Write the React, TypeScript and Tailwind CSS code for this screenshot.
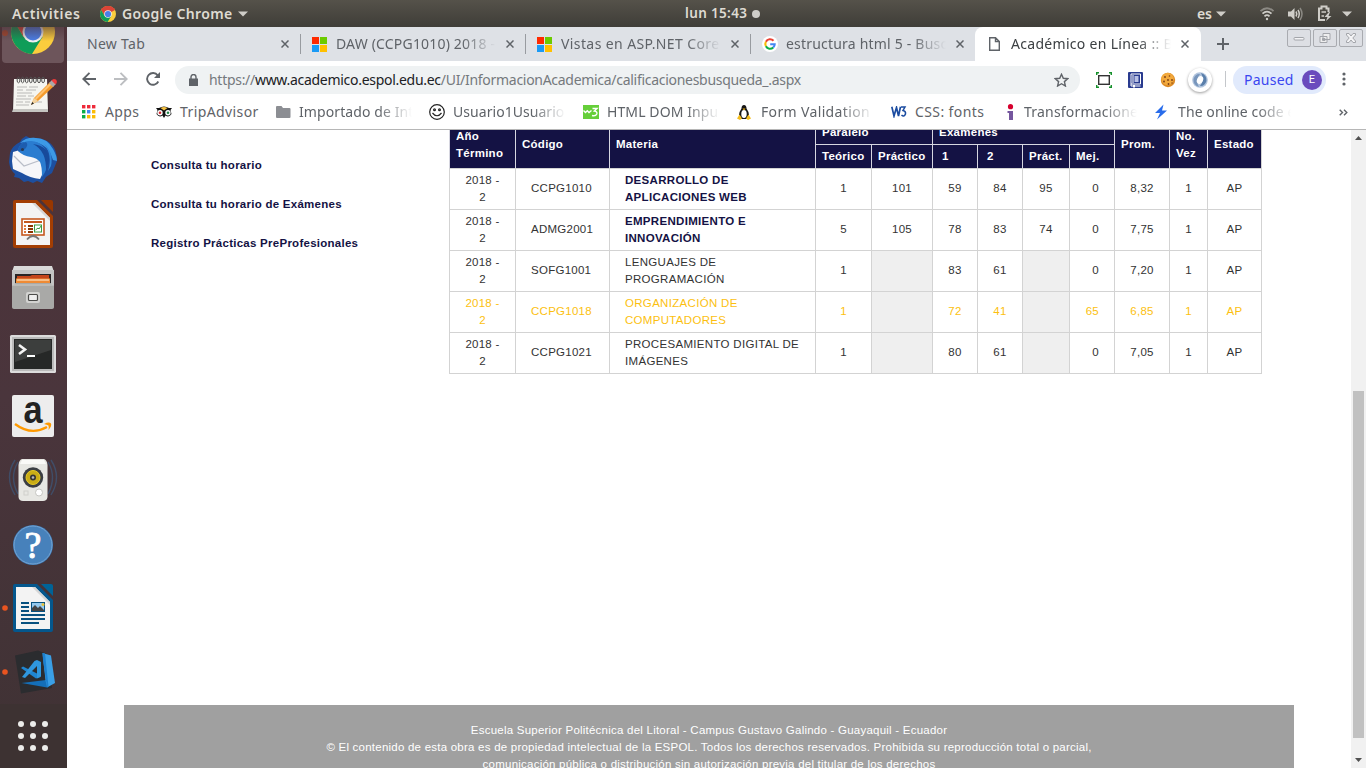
import React from "react";

const ubuntu = "font-['Noto_Sans',sans-serif]";

function ChromeLogo({ size }: { size: number }) {
  return (
    <svg width={size} height={size} viewBox="0 0 44 44" className="shrink-0">
      <circle cx="22" cy="22" r="22" fill="#fbcd3d" />
      <path d="M22 22 L3 11 A22 22 0 0 1 41 11 Z" fill="#db4437" />
      <path d="M22 11 H41 A22 22 0 0 0 3 11 L12.5 27 Z" fill="#db4437" />
      <path d="M3 11 A22 22 0 0 0 21 44 L31.5 27 L22 22 L12.5 27 Z" fill="#0f9d58" />
      <circle cx="22" cy="22" r="10.5" fill="#f1f1f1" />
      <circle cx="22" cy="22" r="8.5" fill="#4a7fe8" />
    </svg>
  );
}

function Caret() {
  return (
    <svg width="10" height="6" viewBox="0 0 10 6">
      <path d="M0 .5H10L5 5.5Z" fill="#cfcdc8" />
    </svg>
  );
}

function TopBar() {
  return (
    <header className={`${ubuntu} flex h-[27px] shrink-0 items-center bg-gradient-to-b from-[#55524a] to-[#3f3d38] text-[14px] font-semibold text-[#dfdbd2]`}>
      <span className="w-[88px] pl-3 tracking-[0.6px]">Activities</span>
      <div className="flex w-[597px] items-center pl-3">
        <ChromeLogo size={16} />
        <span className="ml-[6px] mr-[6px] w-[110px] whitespace-nowrap tracking-[0.35px]">Google Chrome</span>
        <Caret />
      </div>
      <span className="w-[67px] whitespace-nowrap text-[13.5px] tracking-[0.35px]">lun 15:43</span>
      <span className="h-2 w-2 rounded-full bg-[#cfcdc8]" />
      <div className="ml-auto flex items-center pr-[14px]">
        <span className="mr-[4px]">es</span>
        <Caret />
        <svg className="ml-[33px]" width="16" height="16" viewBox="0 0 16 16" fill="none" stroke="#cfcdc8" strokeWidth="1.8">
          <path d="M1.5 5.2Q8 -.8 14.500 5.200" stroke="#8b8983" />
          <path d="M3.500 7.700Q8 3.600 12.500 7.700" />
          <path d="M5.500 10.300Q8 8 10.500 10.300" />
          <circle cx="8" cy="13" r="1.2" fill="#cfcdc8" stroke="none" />
        </svg>
        <svg className="ml-3" width="17" height="16" viewBox="0 0 17 16" fill="none" stroke="#cfcdc8" strokeWidth="1.5">
          <path d="M1 5.500H4L7.500 2V14L4 10.500H1Z" fill="#cfcdc8" stroke="none" />
          <path d="M9 5.500Q10.500 8 9 10.500M11 4Q13.500 8 11 12" />
          <path d="M13 2Q17 8 13 14" stroke="#8b8983" />
        </svg>
        <svg className="ml-[13px]" width="16" height="17" viewBox="0 0 16 17" fill="none" stroke="#cfcdc8" strokeWidth="2">
          <path d="M11.500 7V3.500H9.500V1.500H4.500V3.500H2V15H8" />
          <path d="M4.500 7H9M4.500 11H7" strokeWidth="1.6" />
          <path d="M12 7L7.500 12H10.500L9 16L14.500 11H11.500L13 7Z" fill="#cfcdc8" stroke="none" />
        </svg>
        <span className="ml-[9px] flex"><Caret /></span>
      </div>
    </header>
  );
}

function DocBase({ dark, mid, children }: { dark: string; mid: string; children: React.ReactNode }) {
  return (
    <>
      <path d="M15 8H37L53 24V54Q53 56 51 56H15Q13 56 13 54V10Q13 8 15 8Z" fill={dark} />
      <path d="M41 8H51Q53 8 53 10V20Z" fill={mid} />
      <path d="M16 11H35L50 26V53H16Z" fill="#f3f3f3" />
      <path d="M35 11L50 26V29L32 11Z" fill="#d5d5d5" />
      {children}
    </>
  );
}

const dockIcons: { name: string; running?: boolean; art: React.ReactNode }[] = [
  {
    name: "notes",
    art: (
      <>
        <path d="M14 16H47L49 48H12Z" fill="#2d2224" opacity=".6" />
        <path d="M14 15H47L48 47H13Z" fill="#f5f5f1" />
        <path d="M13 45H48V48H12Z" fill="#c5c5c1" />
        {[0, 1, 2, 3, 4, 5, 6].map((i) => (
          <ellipse key={i} cx={18.500 + i * 4.100} cy="16" rx="1.400" ry="2.800" fill="none" stroke="#555" strokeWidth="1" />
        ))}
        <path d="M17 23H27M29 23H38M17 26H23M26 26H36M17 29H32M17 32H26M28 32H34M16 35H31M16 38H23M25 38H30M35 38H42M16 41H29" stroke="#aaa" strokeWidth=".8" />
        <path d="M31 41L34 34L50 18L54 22L38 37Z" fill="#f39a2c" />
        <path d="M35 34L50 19L51.500 20.500L36 36Z" fill="#ffc270" />
        <path d="M31 41L34 34L38 37Z" fill="#f2d3a0" />
        <path d="M31 41L32.200 38L34 39.500Z" fill="#222" />
        <path d="M49 19L52 16L56 20L53 23Z" fill="#a9a9a9" />
        <path d="M51.500 16.500Q53 14 56 15.500Q58 18 55.500 20.500Z" fill="#ee3b3b" />
      </>
    ),
  },
  {
    name: "mail",
    art: (
      <>
        <path d="M10 25L9 34Q10 42 15 46L14 49L19 50L24 54L28 53L33 55L37 53L42 55L46 49L52 45L55 38L57 33Q57 17 45 12Q37 9 30 10L26 8Q22 10 20 14Q12 18 10 25Z" fill="#1d4fa0" />
        <path d="M20 15Q26 9 36 10Q47 10 53 21Q57 28 57 33L53 32Q48 16 34 14Q26 13 20 15Z" fill="#3d9ae6" />
        <path d="M13 24L20 22L44 33L42 47L40 51Q30 50 22 45L13 41L12 33Z" fill="#f6f6f9" />
        <path d="M14 28L24 38L41 32" fill="none" stroke="#b9bdc8" strokeWidth="1.200" />
        <path d="M18 23Q19 13 31 13Q46 14 48 31Q48 41 42 49Q42 38 40 34Q37 30 31 29Q23 28 18 23Z" fill="#2a7cd0" />
        <path d="M18 23Q18 16 26 14Q29 17 25 21Q22 24 18 23Z" fill="#1d5daf" />
        <path d="M33 16Q49 18 49 32L46 44Q47 23 33 16Z" fill="#174a9b" />
        <path d="M44 16Q54 24 51 38L48 43Q53 27 44 16Z" fill="#2f86d9" />
        <circle cx="22.500" cy="21.500" r="1.500" fill="#2a3950" />
      </>
    ),
  },
  {
    name: "impress",
    art: (
      <DocBase dark="#a33e03" mid="#983700">
        <rect x="22" y="27" width="22" height="16" fill="#fff" stroke="#c5581f" strokeWidth="1.600" />
        <rect x="24" y="29" width="18" height="2" fill="#c5581f" />
        <path d="M24 34H26M24 37H26M24 40H26" stroke="#e0793d" strokeWidth="1.800" />
        <path d="M28 34H33M28 37H33M28 40H33" stroke="#8c3500" strokeWidth="1.800" />
        <rect x="34.500" y="33" width="7" height="7" fill="#fff" stroke="#3b9b3f" />
        <path d="M35.500 38L38 36L39 37L41 34" fill="none" stroke="#3b9b3f" />
        <path d="M27 47.500Q30 44 33 44Q36 44 39 47.500" fill="none" stroke="#777" strokeWidth="1.800" />
      </DocBase>
    ),
  },
  {
    name: "files",
    art: (
      <>
        <path d="M14 10H52L54 16V28H12V16Z" fill="#d9d9d9" />
        <path d="M12 14H54V50Q54 52 52 52H14Q12 52 12 50Z" fill="#c4c4c4" />
        <path d="M15 18H51V28H15Z" fill="#292425" />
        <path d="M17 20H30L32 19H49V28H17Z" fill="#c4451b" />
        <path d="M16 22.500H50V28H16Z" fill="#ef8b35" />
        <path d="M17 24H49" stroke="#fff1dc" />
        <path d="M15 27H51V28L54 30V51Q54 53 52 53H14Q12 53 12 51V30L15 28Z" fill="#a9a9a7" />
        <path d="M13 29H53" stroke="#cbcbc9" />
        <rect x="26" y="36" width="14" height="11" rx="2" fill="#d3d3d1" />
        <rect x="28.500" y="38.500" width="9" height="6" rx="1" fill="#eee" stroke="#4b4b49" strokeWidth="1.200" />
      </>
    ),
  },
  {
    name: "terminal",
    art: (
      <>
        <rect x="10" y="15" width="46" height="38" rx="1.500" fill="#dcdcdc" />
        <rect x="12" y="17" width="42" height="34" fill="#bababa" />
        <rect x="14" y="19" width="38" height="30" fill="#262827" />
        <path d="M15 20H51V30L15 42Z" fill="#3c3e3d" />
        <path d="M19 25L25 29.500L19 34" fill="none" stroke="#f4f4f4" strokeWidth="2.600" />
        <path d="M27 36H35" stroke="#fff" strokeWidth="2" />
      </>
    ),
  },
  {
    name: "store",
    art: (
      <>
        <rect x="12" y="11" width="42" height="42" rx="2" fill="#ededed" />
        <g transform="translate(33 39.300) scale(.88 1)">
          <text x="0" y="0" textAnchor="middle" fontFamily="Liberation Sans" fontWeight="700" fontSize="39" fill="#222">a</text>
        </g>
        <path d="M15 40Q31 52 47 43" fill="none" stroke="#ff9900" strokeWidth="2.300" />
        <path d="M44 40Q49 37.500 51 39.500Q52 42 48.500 46Q49 43 48.500 41.500Q47 40.500 44 40Z" fill="#ff9900" />
      </>
    ),
  },
  {
    name: "audio",
    art: (
      <>
        <g fill="none" stroke="#3d5577" strokeWidth="1.400" opacity=".75">
          <path d="M15 12Q4 29 15 47M18 14Q9 29 18 46M51 12Q62 29 51 47M48 14Q57 29 48 46" />
        </g>
        <path d="M22 11H44Q47 12 47.500 17V49Q47 53 43 53H23Q19 53 18.500 49L18.500 17Q19 12 22 11Z" fill="#e7e7e3" />
        <path d="M22 12H44L46 16H20Z" fill="#fafaf8" />
        <circle cx="33" cy="29.500" r="10.200" fill="#3b3e43" />
        <circle cx="33" cy="29.500" r="7" fill="#c9ac16" stroke="#e5c926" />
        <circle cx="33" cy="29.500" r="3" fill="#343434" />
        <circle cx="33" cy="29.500" r="1.300" fill="#b9b9b9" />
        <circle cx="39" cy="44.500" r="3.500" fill="#fff" stroke="#c6c6c2" />
        <rect x="24" y="43" width="4" height="4" fill="none" stroke="#d0d0cc" />
      </>
    ),
  },
  {
    name: "help",
    art: (
      <>
        <circle cx="33" cy="33" r="20" fill="#3c77b4" />
        <circle cx="33" cy="33" r="19" fill="#4781bb" stroke="#75a5d3" />
        <text x="33" y="46" textAnchor="middle" fontFamily="Liberation Serif" fontSize="38" fill="#fff" stroke="#fff" strokeWidth=".9">?</text>
      </>
    ),
  },
  {
    name: "writer",
    running: true,
    art: (
      <DocBase dark="#04578d" mid="#006397">
        <path d="M21 27H29M21 31H29M21 35H29M21 39H45M21 43H45M21 47H39" stroke="#085180" strokeWidth="2" />
        <rect x="31.500" y="26.500" width="13" height="9" fill="#95c9ee" stroke="#085180" />
        <path d="M32 35V32L35 29L38 32L40 30L44 34V35Z" fill="#444" />
        <circle cx="43" cy="28.500" r="1.500" fill="#e9c339" />
      </DocBase>
    ),
  },
  {
    name: "code",
    running: true,
    art: (
      <>
        <path d="M15 15.500L38 10.500L47 14L52 48L21 53.500Z" fill="#2b2c2f" />
        <path d="M21.500 43L46 40L47 47.500Z" fill="#146fb8" />
        <path d="M42.500 13L51 15.500L55 43L47 47.500L45.500 40Z" fill="#3a9fe6" />
        <path d="M42.500 13L45 13.500L48.500 46.500L47 47.500L43 20Z" fill="#1c80cf" />
        <path d="M21 28L23 26.500L39 34.500L40.500 37L36 38.500Z" fill="#1f86d2" />
        <path d="M22 37L34.500 21L37 20L41 22V36.500L37 38.500V26L25 38Z" fill="#2f97de" />
      </>
    ),
  },
];

function Dock() {
  return (
    <aside className="flex w-[67px] shrink-0 flex-col overflow-hidden bg-gradient-to-b from-[#4d3238] via-[#4a353c] to-[#3f3234]">
      <div className="relative flex h-[37px] shrink-0 flex-col justify-end px-[2px] pb-[1px] pr-[3px]">
        <div className="flex h-[36px] items-end justify-center overflow-hidden rounded-b-[4px] bg-[#6d555b] pb-[9px]">
          <ChromeLogo size={44} />
        </div>
        <span className="absolute left-[2px] top-[3px] h-[6px] w-[6px] rounded-full bg-[#a5482e]" />
        <span className="absolute left-0 top-0 h-[14px] w-[67px] bg-gradient-to-b from-[#4d3238]/60 to-transparent" />
      </div>
      {dockIcons.map((d) => (
        <svg key={d.name} width="67" height="64" viewBox="0 0 67 64" className="shrink-0">
          {d.running && <circle cx="5" cy="32" r="2.800" fill="#e95420" />}
          {d.art}
        </svg>
      ))}
      <svg width="67" height="64" viewBox="0 0 67 64" className="shrink-0 bg-[#3d3232]">
        {[20, 32, 44].map((y) => [21, 33, 45].map((x) => <circle key={`${x}-${y}`} cx={x} cy={y} r="3" fill="#ececea" />))}
      </svg>
    </aside>
  );
}

function CloseX() {
  return (
    <svg width="8" height="8" viewBox="0 0 8 8" className="shrink-0" stroke="#5f6368" strokeWidth="1.500">
      <path d="M.5 .5L7.500 7.500M7.500 .5L.5 7.500" />
    </svg>
  );
}

function MsLogo() {
  return (
    <svg width="15" height="15" viewBox="0 0 15 15">
      <path d="M0 0H7V7H0Z" fill="#ff2a00" />
      <path d="M8 0H15V7H8Z" fill="#6ccb00" />
      <path d="M0 8H7V15H0Z" fill="#1a9af5" />
      <path d="M8 8H15V15H8Z" fill="#ffc000" />
    </svg>
  );
}

function GoogleG() {
  return (
    <svg width="16" height="16" viewBox="0 0 16 16">
      <circle cx="8" cy="8" r="8" fill="#fff" />
      <g fill="none" strokeWidth="2.100">
        <path d="M11.500 4.700A4.700 4.700 0 0 0 3.900 5.700" stroke="#ea4335" />
        <path d="M3.900 5.700A4.700 4.700 0 0 0 3.900 10.300" stroke="#fbbc05" />
        <path d="M3.900 10.300A4.700 4.700 0 0 0 11.200 11.500" stroke="#0cae48" />
        <path d="M11.200 11.500A4.700 4.700 0 0 0 12.700 8.200H8.200" stroke="#4285f4" />
      </g>
    </svg>
  );
}

function PageIcon() {
  return (
    <svg width="11" height="14" viewBox="0 0 11 14" fill="none" stroke="#5f6368" strokeWidth="1.400">
      <path d="M.7 .7H6.500L10.300 4.500V13.300H.7ZM6.500 .7V4.500H10.300" />
    </svg>
  );
}

const tabs = [
  { title: "New Tab", track: "tracking-[0.3px]" },
  { title: "DAW (CCPG1010) 2018 -", icon: <MsLogo />, track: "tracking-[0.18px]", faded: true },
  { title: "Vistas en ASP.NET Core", icon: <MsLogo />, track: "tracking-[0.4px]", faded: true },
  { title: "estructura html 5 - Busc", icon: <GoogleG />, track: "tracking-[0.2px]", faded: true },
];

const fade = "whitespace-nowrap [mask-image:linear-gradient(to_right,black_calc(100%_-_34px),transparent)]";

function WinButton({ children }: { children: React.ReactNode }) {
  return (
    <span className="flex h-[18px] w-6 items-center justify-center rounded-[2px] border border-[#a9abb0] bg-[#dddfe4]">
      <svg width="14" height="12" viewBox="0 0 14 12" fill="none" stroke="#a3a5aa">{children}</svg>
    </span>
  );
}

function TabStrip() {
  return (
    <div className={`${ubuntu} flex h-[34px] items-stretch bg-[#dee1e6] pl-2 text-[14px] text-[#5f6368]`}>
      {tabs.map((t, i) => (
        <div key={t.title} className="flex w-[225px] shrink-0 items-center pl-3">
          {t.icon && <span className="flex w-6 shrink-0">{t.icon}</span>}
          <span className={`pb-[2px] whitespace-nowrap ${t.faded ? fade : ""} ${t.track} ${t.icon ? "w-[160px]" : "w-[184px]"}`}>{t.title}</span>
          <span className="ml-[10px] flex"><CloseX /></span>
          {i < 3 && <span className="-mr-px ml-auto h-5 w-px bg-[#989ba0]" />}
        </div>
      ))}
      <div className="flex w-[226px] shrink-0 items-center rounded-t-[8px] bg-white pl-[14px] text-[#3c4043]">
        <span className="w-[22px] shrink-0"><PageIcon /></span>
        <span className={`${fade} w-[160px] pb-[2px] tracking-[0.3px]`}>Académico en Línea :: B</span>
        <span className="ml-[10px] flex"><CloseX /></span>
      </div>
      <svg width="12" height="12" viewBox="0 0 12 12" className="ml-4 mt-[11px] shrink-0" stroke="#5f6368" strokeWidth="2">
        <path d="M6 0V12M0 6H12" />
      </svg>
      <div className="ml-auto flex gap-[2px] pr-[3px] pt-[2px]">
        <WinButton><rect x="2" y="5.500" width="10" height="2.500" rx="1" fill="#f3f3f5" /></WinButton>
        <WinButton>
          <path d="M5 1.500H12V7.500H5ZM2 4.500H9V10.500H2ZM4.500 6.500H7V8.500H4.500Z" fill="#eee" />
        </WinButton>
        <WinButton><path d="M2.500 1.500H5L7 4L9 1.500H11.500V3L8.800 6L11.500 9V10.500H9L7 8L5 10.500H2.500V9L5.200 6L2.500 3Z" fill="#f3f3f5" /></WinButton>
      </div>
    </div>
  );
}

function Toolbar() {
  return (
    <div className={`${ubuntu} flex h-9 items-center bg-white text-[14px]`}>
      <div className="flex w-[108px] shrink-0 items-center gap-[18px] pl-[15px]">
        <svg width="14" height="14" viewBox="0 0 14 14" fill="none" stroke="#5f6368" strokeWidth="1.900"><path d="M14 7H1.500M7.500 .8L1.300 7L7.500 13.200" /></svg>
        <svg width="14" height="14" viewBox="0 0 14 14" fill="none" stroke="#bcbec1" strokeWidth="1.900"><path d="M0 7H12.500M6.500 .8L12.700 7L6.500 13.200" /></svg>
        <svg width="15" height="14" viewBox="0 0 15 14" fill="none" stroke="#5f6368" strokeWidth="1.900"><path d="M12.300 9.500A5.900 5.900 0 1 1 11.700 3.300" /><path d="M14 0V6H8Z" fill="#5f6368" stroke="none" /></svg>
      </div>
      <div className="mt-[2px] flex h-7 w-[905px] shrink-0 items-center rounded-full bg-[#eff2f3] pl-[14px] pr-[11px]">
        <svg width="9" height="12" viewBox="0 0 9 12" className="shrink-0"><path d="M0 4.500H9V12H0Z" fill="#5f6368" /><path d="M2 5V3A2.500 2.500 0 0 1 7 3V5" fill="none" stroke="#5f6368" strokeWidth="1.400" /></svg>
        <span className="ml-[11px] whitespace-nowrap pb-[2px] tracking-[-0.29px] text-[#75797d]">
          https://<span className="text-[#202124]">www.academico.espol.edu.ec</span>/UI/InformacionAcademica/calificacionesbusqueda_.aspx
        </span>
        <svg width="15" height="14" viewBox="0 0 15 14" className="ml-auto shrink-0" fill="none" stroke="#5f6368" strokeWidth="1.400"><path d="M7.500 1.300L9.300 5.300L13.700 5.700L10.400 8.600L11.400 13L7.500 10.700L3.600 13L4.600 8.600L1.300 5.700L5.700 5.300Z" /></svg>
      </div>
      <svg width="16" height="16" viewBox="0 0 16 16" className="ml-4 mt-[2px] shrink-0" fill="none">
        <rect x="2.700" y="3.700" width="10.600" height="8.600" fill="#fff" stroke="#333" strokeWidth="1.400" />
        <path d="M.7 3V.7H3M13 .7H15.300V3M.7 13V15.300H3M13 15.300H15.300V13" stroke="#16912c" strokeWidth="1.400" />
      </svg>
      <svg width="15" height="16" viewBox="0 0 15 16" className="ml-4 mt-[2px] shrink-0">
        <rect width="15" height="16" rx="1" fill="#293b8f" />
        <path d="M3 2H12.500V12H3ZM3 12V14H12.500" fill="none" stroke="#fff" />
        <path d="M5 3V11" stroke="#fff" />
        <rect x="6.500" y="4" width="4" height="6" fill="#b9c1e5" />
        <path d="M5 13H7V16L6 15L5 16Z" fill="#fff" />
      </svg>
      <svg width="16" height="16" viewBox="0 0 16 16" className="ml-[17px] mt-[2px] shrink-0">
        <circle cx="8" cy="8" r="7.200" fill="#dc8a25" /><circle cx="7.500" cy="7" r="6.200" fill="#f2a93c" />
        <g fill="#7a3d15"><circle cx="5" cy="5" r=".9" /><circle cx="9.500" cy="4" r=".8" /><circle cx="8" cy="8" r=".9" /><circle cx="4" cy="9.500" r=".9" /><circle cx="12" cy="8" r=".9" /><circle cx="8.500" cy="12" r=".9" /><circle cx="12" cy="11" r=".7" /></g>
      </svg>
      <span className="ml-3 mt-[2px] flex h-6 w-6 shrink-0 items-center justify-center rounded-full bg-white shadow-[0_1px_3px_rgba(0,0,0,.4)]">
        <svg width="16" height="16" viewBox="0 0 16 16" fill="none"><circle cx="8" cy="8" r="7.800" fill="#b1c4dd" /><path d="M9 1Q15 3 14.500 9Q12.500 14.500 8 14Q13 8 9 1Z" fill="#5a7fab" /><path d="M7 15Q1 13 1.500 7Q3.500 1.500 8 2Q3 8 7 15Z" fill="#7896bc" /><ellipse cx="8" cy="8" rx="3" ry="4" transform="rotate(25 8 8)" fill="#fff" /></svg>
      </span>
      <span className="ml-[13px] h-4 w-px shrink-0 bg-[#c4c7cb]" />
      <div className="ml-[7px] mt-[2px] flex h-7 w-[93px] shrink-0 items-center justify-between rounded-full bg-[#e1eafc] pl-[11px] pr-1 text-[#3a46f0]">
        <span className="pb-[2px] tracking-[0.25px]">Paused</span>
        <span className="flex h-5 w-5 items-center justify-center rounded-full bg-[#6a4bbd] font-[Roboto,sans-serif] text-[11px] text-white">E</span>
      </div>
      <svg width="4" height="14" viewBox="0 0 4 14" className="ml-4 shrink-0" fill="#5f6368"><circle cx="2" cy="2" r="1.600" /><circle cx="2" cy="7" r="1.600" /><circle cx="2" cy="12" r="1.600" /></svg>
    </div>
  );
}

const bookmarks = [
  {
    title: "Apps", box: "w-[74px]", gap: "w-[23px]", track: "tracking-[0.4px]",
    icon: (
      <svg width="14" height="14" viewBox="0 0 14 14">
        {["#ee2a3a", "#ee2a3a", "#ee2a3a", "#0cae48", "#4285f4", "#fbbc05", "#0cae48", "#fbbc05", "#fbbc05"].map((c, i) => (
          <rect key={i} x={(i % 3) * 5} y={Math.floor(i / 3) * 5} width="3.400" height="3.400" fill={c} />
        ))}
      </svg>
    ),
  },
  {
    title: "TripAdvisor", box: "w-[120px]", gap: "w-[24px]", track: "tracking-[0.4px]",
    icon: (
      <svg width="16" height="12" viewBox="0 0 16 12"><path d="M0 2H3Q8 -1 13 2H16L14.500 4L15.500 8Q13 12 9.500 9.500L8 12L6.500 9.500Q3 12 .5 8L1.500 4Z" fill="#111" /><path d="M4.500 2Q8 0 11.500 2L8 4.500Z" fill="#f6c343" /><circle cx="4" cy="6.700" r="2.700" fill="#fff" /><circle cx="12" cy="6.700" r="2.700" fill="#fff" /><circle cx="4" cy="6.700" r="1.300" fill="#d8262f" /><circle cx="12" cy="6.700" r="1.300" fill="#21884b" /></svg>
    ),
  },
  {
    title: "Importado de Int", box: "w-[153px]", gap: "w-[23px]", fade: true, track: "tracking-[0.1px]",
    icon: <svg width="15" height="12" viewBox="0 0 15 12"><path d="M1 0H5.500L7 2H13.500Q14.500 2 14.500 3V11Q14.500 12 13.500 12H1Q0 12 0 11V1Q0 0 1 0Z" fill="#8c8e93" /></svg>,
  },
  {
    title: "Usuario1Usuario", box: "w-[154px]", gap: "w-[24px]", fade: true, track: "tracking-[0.05px]",
    icon: <svg width="16" height="16" viewBox="0 0 16 16" fill="none" stroke="#222" strokeWidth="1.200"><circle cx="8" cy="8" r="7.300" fill="#fff" /><circle cx="5.500" cy="5.800" r=".9" /><circle cx="10.500" cy="5.800" r=".9" /><path d="M3.500 9Q8 14.500 12.500 9" /></svg>,
  },
  {
    title: "HTML DOM Inpu", box: "w-[154px]", gap: "w-[24px]", fade: true, track: "tracking-[0.1px]",
    icon: <svg width="16" height="14" viewBox="0 0 16 14" fill="none" stroke="#fff" strokeWidth="1.400"><rect width="16" height="14" fill="#66cf3a" stroke="none" /><path d="M.5 5.500L2.500 7.500L4.300 5.800L6 7.500L8.500 5.500M9.500 3.500H14L11.300 6Q14.500 6.500 13.800 9Q12.500 11.500 9 10.500" /></svg>,
  },
  {
    title: "Form Validation", box: "w-[154px]", gap: "w-[24px]", fade: true, track: "tracking-[0.35px]",
    icon: <svg width="14" height="15" viewBox="0 0 14 15"><path d="M7 0Q9.500 0 9.500 3.500Q12 7 12 10L10 14H4L2 10Q2 7 4.500 3.500Q4.500 0 7 0Z" fill="#171717" /><ellipse cx="7" cy="9" rx="2.700" ry="4" fill="#fff" /><path d="M5.500 3.500H8.500L7 5.500Z" fill="#f2b619" /><path d="M2.500 9.500L5 13.500L3 15L0 13.500ZM11.500 9.500L9 13.500L11 15L14 13.500Z" fill="#f4bd1d" /></svg>,
  },
  {
    title: "CSS: fonts", box: "w-[115px]", gap: "w-[24px]", track: "tracking-[0.4px]",
    icon: <svg width="16" height="12" viewBox="0 0 16 12" fill="none" stroke="#1a4ba0" strokeWidth="1.700"><path d="M.8 .8L3 10L5.500 1.500L7.500 10L9.500 .8" /><path d="M10 1H14L12 4.500Q15 5 14.500 8Q13 11.500 10.500 9" strokeWidth="1.500" /></svg>,
  },
  {
    title: "Transformacione", box: "w-[149px]", gap: "w-[18px]", fade: true, track: "tracking-[0.2px]",
    icon: <svg width="8" height="16" viewBox="0 0 8 16"><circle cx="4.500" cy="2.700" r="2.600" fill="#d6002e" /><path d="M1.500 7H7V16H3V9H1.500Z" fill="#75569e" /></svg>,
  },
  {
    title: "The online code e", box: "w-[160px]", gap: "w-[23px]", fade: true, track: "tracking-[0.1px]",
    icon: <svg width="12" height="16" viewBox="0 0 12 16"><path d="M8.500 .5L0 9H5L2 15.500L12 6.500H7Z" fill="#286ceb" /></svg>,
  },
];

function BookmarksBar() {
  return (
    <div className={`${ubuntu} flex h-8 items-center border-b border-[#b6b6b6] bg-white pb-[3px] pl-[15px] text-[14px] text-[#5f6368]`}>
      {bookmarks.map((b) => (
        <div key={b.title} className={`flex shrink-0 items-center ${b.box}`}>
          <span className={`flex shrink-0 ${b.gap}`}>{b.icon}</span>
          <span className={`pb-px ${b.fade ? `${fade} w-[113px]` : "whitespace-nowrap"} ${b.track}`}>{b.title}</span>
        </div>
      ))}
      <svg width="9" height="7" viewBox="0 0 9 7" className="ml-auto mr-[18px]" fill="none" stroke="#5f6368" strokeWidth="1.400"><path d="M.7 .7L3.500 3.500L.7 6.300M5 .7L7.800 3.500L5 6.300" /></svg>
    </div>
  );
}

const rows = [
  { code: "CCPG1010", name: ["DESARROLLO DE", "APLICACIONES WEB"], values: ["1", "101", "59", "84", "95", "0", "8,32", "1", "AP"], bold: true },
  { code: "ADMG2001", name: ["EMPRENDIMIENTO E", "INNOVACIÓN"], values: ["5", "105", "78", "83", "74", "0", "7,75", "1", "AP"], bold: true },
  { code: "SOFG1001", name: ["LENGUAJES DE", "PROGRAMACIÓN"], values: ["1", "", "83", "61", "", "0", "7,20", "1", "AP"] },
  { code: "CCPG1018", name: ["ORGANIZACIÓN DE", "COMPUTADORES"], values: ["1", "", "72", "41", "", "65", "6,85", "1", "AP"], warn: true },
  { code: "CCPG1021", name: ["PROCESAMIENTO DIGITAL DE", "IMÁGENES"], values: ["1", "", "80", "61", "", "0", "7,05", "1", "AP"] },
];

const head = "flex items-center border-l border-t border-[#d6d6e0] bg-[#141244] font-bold text-white";
const cell = "flex items-center border-l border-t border-[#d3d3d3] pb-px";

function Grades() {
  return (
    <div className="-mt-[10px] ml-[382px] grid w-[813px] grid-cols-[66px_94px_206px_56px_61px_45px_45px_47px_45px_55px_38px_54px] grid-rows-[24px_24px_repeat(5,41px)] border-b border-r border-[#d3d3d3]">
      <div className={`${head} row-span-2 pl-[6px]`}>Año<br />Término</div>
      <div className={`${head} row-span-2 pl-[6px]`}>Código</div>
      <div className={`${head} row-span-2 pl-[6px]`}>Materia</div>
      <div className={`${head} col-span-2 pl-[6px]`}>Paralelo</div>
      <div className={`${head} col-span-4 pl-[6px]`}>Exámenes</div>
      <div className={`${head} row-span-2 pl-[6px]`}>Prom.</div>
      <div className={`${head} row-span-2 pl-[6px]`}>No.<br />Vez</div>
      <div className={`${head} row-span-2 pl-[6px]`}>Estado</div>
      {["Teórico", "Práctico", "1", "2", "Práct.", "Mej."].map((h) => (
        <div key={h} className={`${head} ${h.length === 1 ? "pl-[9px]" : "pl-[6px]"}`}>{h}</div>
      ))}
      {rows.map((r) => (
        <div key={r.code} className={`col-span-12 grid grid-cols-subgrid ${r.warn ? "text-[#fcbf10]" : "text-[#333]"}`}>
          <div className={`${cell} justify-center text-center`}>2018 -<br />2</div>
          <div className={`${cell} pl-[15px]`}>{r.code}</div>
          <div className={`${cell} pl-[15px] tracking-[0.31px] ${r.bold ? "font-bold text-[#141244]" : ""}`}>
            <span>{r.name[0]}<br />{r.name[1]}</span>
          </div>
          {r.values.map((v, i) => (
            <div key={i} className={`${cell} ${i === 5 ? "justify-end pr-[15px]" : "justify-center"} ${v ? "" : "bg-[#efefef]"}`}>{v}</div>
          ))}
        </div>
      ))}
    </div>
  );
}

function Scrollbar() {
  return (
    <div className="flex w-[15px] shrink-0 flex-col items-center bg-[#f1f1f1]">
      <svg width="7" height="4" viewBox="0 0 7 4" className="mt-[6px] shrink-0"><path d="M0 4L3.500 0L7 4Z" fill="#505050" /></svg>
      <div className="mt-[251px] h-[347px] w-[11px] shrink-0 bg-[#c1c1c1]" />
      <svg width="7" height="4" viewBox="0 0 7 4" className="mb-[6px] mt-auto shrink-0"><path d="M0 0H7L3.500 4Z" fill="#505050" /></svg>
    </div>
  );
}

export default function App() {
  return (
    <div className="flex h-screen w-full flex-col overflow-hidden bg-white">
      <TopBar />
      <div className="flex min-h-0 flex-1">
        <Dock />
        <div className="flex min-w-0 flex-1 flex-col">
          <TabStrip />
          <Toolbar />
          <div className="h-px shrink-0 bg-white" />
          <BookmarksBar />
          <div className="flex min-h-0 flex-1">
            <main className="flex min-w-0 flex-1 flex-col overflow-hidden font-['Liberation_Sans',Arial,sans-serif] text-[11.5px] leading-[17px] tracking-[0.26px] text-[#333]">
              <div className="grid h-[575px] shrink-0 grid-cols-1">
                <nav className="col-start-1 row-start-1 flex w-[300px] flex-col gap-[22px] pl-[84px] pt-[27px] font-bold text-[#141244]">
                  <span>Consulta tu horario</span>
                  <span>Consulta tu horario de Exámenes</span>
                  <span>Registro Prácticas PreProfesionales</span>
                </nav>
                <div className="col-start-1 row-start-1"><Grades /></div>
              </div>
              <footer className="ml-[57px] h-[100px] w-[1170px] shrink-0 bg-[#a0a0a0] pt-[17px] text-center tracking-[0.23px] text-white">
                <p>Escuela Superior Politécnica del Litoral - Campus Gustavo Galindo - Guayaquil - Ecuador</p>
                <p>© El contenido de esta obra es de propiedad intelectual de la ESPOL. Todos los derechos reservados. Prohibida su reproducción total o parcial,</p>
                <p>comunicación pública o distribución sin autorización previa del titular de los derechos</p>
              </footer>
            </main>
            <Scrollbar />
          </div>
        </div>
      </div>
    </div>
  );
}
